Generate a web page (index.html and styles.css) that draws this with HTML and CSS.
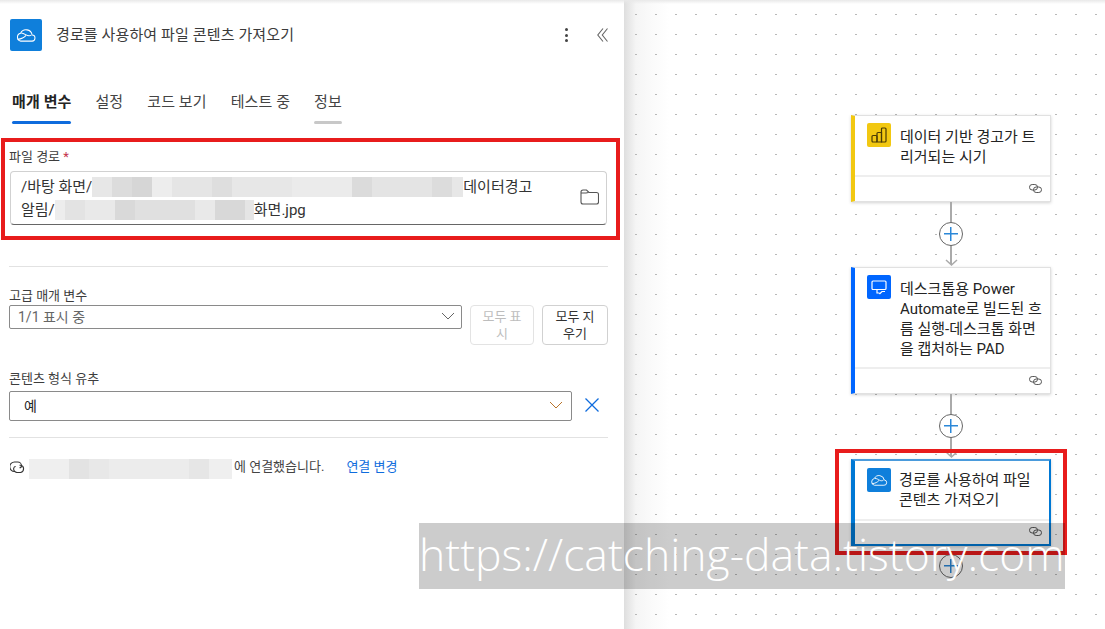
FILE: index.html
```html
<!DOCTYPE html>
<html lang="ko">
<head>
<meta charset="utf-8">
<title>경로를 사용하여 파일 콘텐츠 가져오기</title>
<link rel="stylesheet" href="styles.css">
</head>
<body>
<div class="page">
  <aside class="panel">
    <header class="panel-head">
      <span class="head-icon">
        <svg width="20" height="14" viewBox="0 0 22 16" fill="none" stroke="#fff" stroke-width="1.200"><path d="M5 15h12.500a3.500 3.500 0 0 0 .5-7 7 7 0 0 0-13.200-2A4.600 4.600 0 0 0 5 15z"/><path d="M5.500 5.800c5 .2 7 5.200 11.500 2.400"/><path d="M11 8.500c-2 2.500-5 4-9.500 4.500"/></svg>
      </span>
      <h1 class="head-title">경로를 사용하여 파일 콘텐츠 가져오기</h1>
      <span class="head-more"><i></i><i></i><i></i></span>
      <svg class="head-collapse" width="11" height="14" viewBox="0 0 11 14" fill="none" stroke="#666" stroke-width="1.100"><path d="M6 .5 .8 7 6 13.500"/><path d="M10.500 .5 5.300 7l5.200 6.500"/></svg>
    </header>
    <nav class="tabs">
      <span class="tab tab-active">매개 변수</span>
      <span class="tab">설정</span>
      <span class="tab">코드 보기</span>
      <span class="tab">테스트 중</span>
      <span class="tab tab-hover">정보</span>
    </nav>
    <section class="path-field">
      <label class="field-label">파일 경로 <em>*</em></label>
      <div class="path-input">
        <div class="path-text">/바탕 화면/<span class="blur blur-a"></span>데이터경고<br>알림/<span class="blur blur-b"></span>화면.jpg</div>
        <svg class="folder" width="19" height="16" viewBox="0 0 19 16" fill="none" stroke="#555" stroke-width="1.100"><path d="M1 4V3a2 2 0 0 1 2-2h3.500l2.500 2.500h7.500a2 2 0 0 1 2 2V13a2 2 0 0 1-2 2H3a2 2 0 0 1-2-2z"/><path d="M1 4h5l2.500-.5"/></svg>
      </div>
    </section>
    <hr class="rule rule-first">
    <section class="advanced">
      <label class="field-label">고급 매개 변수</label>
      <div class="advanced-row">
        <div class="select select-small">
          <span class="muted">1/1 표시 중</span>
          <svg class="chev" width="14" height="8" viewBox="0 0 14 8" fill="none" stroke="#666"><path d="m1 1 6 6 6-6"/></svg>
        </div>
        <button class="btn btn-off">모두 표시</button>
        <button class="btn">모두 지우기</button>
      </div>
    </section>
    <section class="content-type">
      <label class="field-label">콘텐츠 형식 유추</label>
      <div class="content-row">
        <div class="select select-big">
          <span>예</span>
          <svg class="chev" width="14" height="8" viewBox="0 0 14 8" fill="none" stroke="#b8742c"><path d="m1 1 6 6 6-6"/></svg>
        </div>
        <svg class="clear" width="14" height="14" viewBox="0 0 14 14" fill="none" stroke="#0f6cdd" stroke-width="1.300"><path d="m.5.500 13 13M13.500.5l-13 13"/></svg>
      </div>
    </section>
    <hr class="rule rule-second">
    <div class="connection">
      <svg class="conn-icon" width="15" height="12" viewBox="0 0 15 12" fill="none" stroke="#333" stroke-width="1.100"><path d="M5 10.500h-.5a4.700 4.700 0 0 1 0-9.500h3.200a3.800 3.800 0 0 1 3.800 3.800c0 1.200-.9 2-2 2"/><path d="M9.500 4.200h1a3.700 3.700 0 0 1 0 7.300H7a3.600 3.600 0 0 1-3.300-4.200c.2-1.100 1-1.800 2-1.800"/></svg>
      <span class="blur blur-c"></span>
      <span class="conn-text">에 연결했습니다.</span>
      <a class="conn-link">연결 변경</a>
    </div>
  </aside>

  <main class="canvas">
    <article class="card card-yellow">
      <div class="card-body">
        <span class="card-icon icon-yellow">
          <svg width="18" height="18" viewBox="0 0 18 18" fill="none" stroke="#4a3b05" stroke-width="1.200"><rect x="2" y="9.500" width="5" height="6.500" rx="1"/><path d="M7 16V7.500a1 1 0 0 1 1-1h3.500V16z"/><path d="M11.500 16V3a1 1 0 0 1 1-1h2.500a1 1 0 0 1 1 1v12a1 1 0 0 1-1 1z"/></svg>
        </span>
        <p class="card-text">데이터 기반 경고가 트리거되는 시기</p>
      </div>
      <div class="card-foot"><svg class="link" width="13" height="9" viewBox="0 0 13 9" fill="none" stroke="#555"><rect x=".5" y=".5" width="8" height="5.500" rx="2.700"/><rect x="4.500" y="3" width="8" height="5.500" rx="2.700"/></svg></div>
    </article>
    <div class="wire wire-one"></div>
    <span class="plus plus-one"></span>
    <svg class="arrow arrow-one" width="13" height="7" viewBox="0 0 13 7" fill="none" stroke="#aaa" stroke-width="1.500"><path d="m1 1 5.500 5L12 1"/></svg>

    <article class="card card-blue">
      <div class="card-body">
        <span class="card-icon icon-blue">
          <svg width="18" height="18" viewBox="0 0 18 18" fill="none" stroke="#fff" stroke-width="1.200"><path d="M3 3h12a1 1 0 0 1 1 1v6.500a1 1 0 0 1-1 1H3a1 1 0 0 1-1-1V4a1 1 0 0 1 1-1z"/><path d="M7 11.500V15h2.500M9.500 16l2.500-2.500h3"/></svg>
        </span>
        <p class="card-text">데스크톱용 Power Automate로 빌드된 흐름 실행-데스크톱 화면을 캡처하는 PAD</p>
      </div>
      <div class="card-foot"><svg class="link" width="13" height="9" viewBox="0 0 13 9" fill="none" stroke="#555"><rect x=".5" y=".5" width="8" height="5.500" rx="2.700"/><rect x="4.500" y="3" width="8" height="5.500" rx="2.700"/></svg></div>
    </article>
    <div class="wire wire-two"></div>
    <span class="plus plus-two"></span>
    <svg class="arrow arrow-two" width="13" height="7" viewBox="0 0 13 7" fill="none" stroke="#aaa" stroke-width="1.500"><path d="m1 1 5.500 5L12 1"/></svg>

    <article class="card card-selected">
      <div class="card-body">
        <span class="card-icon icon-sky">
          <svg width="18" height="12" viewBox="0 0 22 16" fill="none" stroke="#fff" stroke-width="1.200"><path d="M5 15h12.500a3.500 3.500 0 0 0 .5-7 7 7 0 0 0-13.200-2A4.600 4.600 0 0 0 5 15z"/><path d="M5.500 5.800c5 .2 7 5.200 11.500 2.400"/><path d="M11 8.500c-2 2.500-5 4-9.500 4.500"/></svg>
        </span>
        <p class="card-text">경로를 사용하여 파일 콘텐츠 가져오기</p>
      </div>
      <div class="card-foot"><svg class="link" width="13" height="9" viewBox="0 0 13 9" fill="none" stroke="#555"><rect x=".5" y=".5" width="8" height="5.500" rx="2.700"/><rect x="4.500" y="3" width="8" height="5.500" rx="2.700"/></svg></div>
    </article>
    <span class="plus plus-three"></span>
  </main>

  <div class="mark mark-field"></div>
  <div class="mark mark-card"></div>
  <div class="watermark">https://catching-data.tistory.com</div>
</div>
</body>
</html>
```
FILE: styles.css
```css
* { box-sizing: border-box; }
html, body { margin: 0; padding: 0; }
body {
  width: 1105px;
  height: 629px;
  overflow: hidden;
  background: #fff;
  color: #242424;
  font-family: Roboto, "Noto Sans CJK KR", sans-serif;
}
.page {
  position: relative;
  display: flex;
  width: 1105px;
  height: 629px;
  overflow: hidden;
}
.page::before {
  content: "";
  position: absolute;
  z-index: 2;
  left: 0;
  top: 0;
  width: 100%;
  height: 4px;
  background: linear-gradient(#e9e9e9, #fff0);
}

/* left panel */
.panel {
  width: 624px;
  flex: none;
  background: #fff;
  padding: 19px 16px 0 9px;
}
.panel-head {
  display: flex;
  align-items: center;
  height: 32px;
  padding-left: 1px;
}
.head-icon {
  width: 32px;
  height: 32px;
  flex: none;
  display: flex;
  align-items: center;
  justify-content: center;
  background: #0f7fdb;
  border-radius: 2px;
}
.head-title {
  margin: 0 0 3px 14px;
  flex: 1;
  font-size: 15px;
  letter-spacing: .12px;
  font-weight: 400;
  color: #3b3b3b;
}
.head-more {
  display: flex;
  flex-direction: column;
  gap: 2.500px;
  margin-right: 29px;
}
.head-more i {
  display: block;
  width: 3px;
  height: 3px;
  border-radius: 50%;
  background: #444;
}

.tabs {
  display: flex;
  gap: 24px;
  margin-top: 38px;
  padding-left: 3px;
}
.tab {
  position: relative;
  height: 35px;
  padding-top: 2px;
  font-size: 15px;
  letter-spacing: .1px;
  line-height: 22px;
  color: #444;
}
.tab-active { font-weight: 700; color: #242424; }
.tab-active::after, .tab-hover::after {
  content: "";
  position: absolute;
  left: 0;
  right: 0;
  bottom: 0;
  height: 3px;
  border-radius: 2px;
  background: #0f6cdd;
}
.tab-hover::after { background: #c8c8c8; }

.path-field { margin-top: 25px; }
.field-label {
  display: block;
  font-size: 13px;
  line-height: 16px;
  color: #3d3d3d;
}
.field-label em { color: #c4314b; font-style: normal; }
.advanced .field-label, .content-type .field-label {
  padding-top: 1px;
  line-height: 15px;
}
.path-input {
  display: flex;
  align-items: center;
  justify-content: space-between;
  width: 597px;
  height: 54px;
  margin: 6px 0 0 1px;
  padding: 0 7px 0 10px;
  border: 1px solid #d1d1d1;
  border-bottom-color: #666;
  border-radius: 4px;
}
.path-text {
  font-size: 15px;
  line-height: 23px;
  color: #333;
  white-space: nowrap;
  margin-top: 1px;
}
.blur {
  display: inline-block;
  height: 20px;
  vertical-align: middle;
}
.blur-a {
  width: 371px;
  margin-top: -2px;
  background: linear-gradient(90deg,
    #e7e7e7 0 20px, #dcdcdc 20px 40px, #d6d6d6 40px 60px, #ededed 60px 80px,
    #e5e5e5 80px 120px, #dedede 120px 140px, #e7e7e7 140px 200px,
    #ebebeb 200px 260px, #dbdbdb 260px 280px, #e4e4e4 280px 340px,
    #dcdcdc 340px 360px, #e7e7e7 360px);
}
.blur-b {
  width: 199px;
  margin-top: -2px;
  background: linear-gradient(90deg,
    #ededed 0 10px, #e3e3e3 10px 30px, #e9e9e9 30px 60px, #d9d9d9 60px 80px,
    #e0e0e0 80px 140px, #e9e9e9 140px 160px, #d8d8d8 160px 190px, #e5e5e5 190px);
}
.folder { flex: none; margin-top: -3px; }

.rule {
  height: 1px;
  margin: 0;
  border: 0;
  background: #e2e2e2;
}
.rule-first { margin-top: 41px; }
.rule-second { margin-top: 16px; }

.advanced { margin-top: 20px; }
.advanced-row {
  display: flex;
  align-items: flex-start;
  margin-top: 2px;
}
.select {
  display: flex;
  align-items: center;
  justify-content: space-between;
  background: #fff;
  border: 1px solid #8a8a8a;
  border-radius: 2px;
  font-size: 14px;
}
.select-small {
  width: 453px;
  height: 24px;
  padding: 0 6px 2px 8px;
  margin-right: 8px;
}
.muted { color: #666; }
.btn {
  width: 64px;
  height: 40px;
  flex: none;
  margin-right: 8px;
  padding: 0 8px;
  background: #fff;
  border: 1px solid #d1d1d1;
  border-radius: 4px;
  color: #333;
  font: 13px/17px Roboto, "Noto Sans CJK KR", sans-serif;
}
.btn:last-child { width: 66px; margin-right: 0; }
.btn-off { color: #bdbdbd; border-color: #e3e3e3; }

.content-type { margin-top: 25px; }
.content-row {
  display: flex;
  align-items: center;
  margin-top: 5px;
}
.select-big {
  width: 563px;
  height: 30px;
  padding: 0 8px 3px 14px;
  margin-right: 13px;
}
.clear { margin-bottom: 2px; }
.connection {
  display: flex;
  align-items: flex-start;
  margin-top: 21px;
  font-size: 13px;
  line-height: 16px;
}
.conn-icon { flex: none; margin: 2px 4px 0 1px; }
.blur-c {
  width: 203px;
  background: linear-gradient(90deg,
    #efefef 0 40px, #e3e3e3 40px 60px, #e8e8e8 60px 80px, #ececec 80px 160px,
    #e6e6e6 160px 180px, #efefef 180px);
}
.conn-text { margin-left: 2px; color: #444; }
.conn-link { margin-left: 22px; color: #0f6cdd; }

/* flow canvas */
.canvas {
  position: relative;
  flex: 1;
  background: linear-gradient(90deg, #dedede, #f5f5f5 12px, #fbfbfb 30px, #fff 45px);
}
.canvas::before {
  content: "";
  position: absolute;
  inset: 0;
  background: linear-gradient(90deg, #b8b8b8 2px, #fff0 2px) 11px 0 / 20px 100%;
  mask: linear-gradient(#000 1px, #0000 1px) 0 14px / 100% 20px;
}
.card {
  position: absolute;
  left: 227px;
  width: 200px;
  display: flex;
  flex-direction: column;
  background: #fff;
  border: 1px solid #e1e1e1;
  border-left-width: 4px;
  box-shadow: 0 1px 3px #0000002e;
}
.card-yellow { top: 115px; height: 87px; border-left-color: #f2c811; }
.card-blue { top: 267px; height: 127px; border-left-color: #0066ff; }
.card-selected {
  top: 459px;
  height: 87px;
  border: 2px solid #0078d4;
  border-left-width: 4px;
  border-top-color: #4a9bdc;
}
.card-body {
  flex: 1;
  display: flex;
  align-items: flex-start;
  padding: 7px 8px 0 12px;
}
.card-selected .card-body { padding: 7px 7px 0 12px; }
.card-icon {
  width: 24px;
  height: 24px;
  flex: none;
  display: flex;
  align-items: center;
  justify-content: center;
  border-radius: 2px;
}
.icon-yellow { background: #f2c811; }
.icon-blue { background: #0066ff; }
.icon-sky { background: #0f7fdb; }
.card-text {
  margin: 4px 0 0 9px;
  font-size: 15px;
  line-height: 20px;
  color: #242424;
}
.card-selected .card-text { margin: 2px 0 0 8px; }
.card-foot {
  height: 26px;
  flex: none;
  display: flex;
  align-items: center;
  justify-content: flex-end;
  padding: 0 8px 2px 0;
  border-top: 2px solid #eee;
}
.card-selected .card-foot { height: 25px; padding-right: 7px; }
.wire {
  position: absolute;
  left: 326px;
  width: 2px;
  background: #aaa;
}
.wire-one { top: 202px; height: 62px; }
.wire-two { top: 394px; height: 62px; }
.arrow { position: absolute; left: 321px; }
.arrow-one { top: 259px; }
.arrow-two { top: 451px; }
.plus {
  position: absolute;
  left: 315px;
  width: 24px;
  height: 24px;
  background:
    linear-gradient(#2b88d8, #2b88d8) center / 14px 1.500px no-repeat,
    linear-gradient(#2b88d8, #2b88d8) center / 1.500px 14px no-repeat,
    #fff;
  border: 1px solid #666;
  border-radius: 50%;
}
.plus-one { top: 222px; }
.plus-two { top: 414px; }
.plus-three { top: 554px; }

/* annotations over the page */
.mark {
  position: absolute;
  border: 4px solid #e81c1c;
  pointer-events: none;
}
.mark-field { left: 1px; top: 138px; width: 619px; height: 102px; }
.mark-card { left: 835px; top: 449px; width: 232px; height: 106px; }
.watermark {
  position: absolute;
  left: 419px;
  top: 523px;
  width: 646px;
  height: 66px;
  background: #0003;
  color: #fff;
  font-family: "Open Sans", sans-serif;
  font-weight: 300;
  font-size: 44.500px;
  line-height: 62px;
  white-space: nowrap;
}
```
